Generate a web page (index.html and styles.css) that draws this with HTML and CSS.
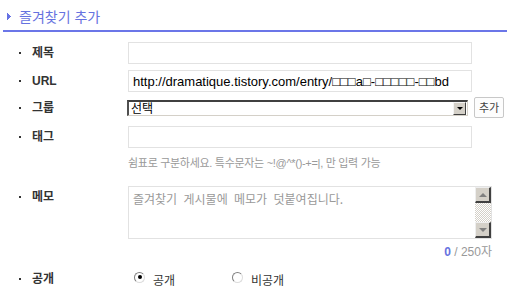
FILE: index.html
```html
<!DOCTYPE html>
<html lang="ko">
<head>
<meta charset="utf-8">
<title>즐겨찾기 추가</title>
<link rel="stylesheet" href="styles.css">
</head>
<body>
<div class="header">
  <svg class="chev" width="4" height="7" viewBox="0 0 4 7"><path d="M0 0h1v1h1v1h1v1h1v1h-1v1h-1v1h-1v1h-1z" fill="#6672e4"/></svg>
  <span class="title">즐겨찾기 추가</span>
</div>
<div class="form">
  <div class="row r-title">
    <div class="label"><i class="dot"></i>제목</div>
    <input class="field" type="text" value="">
  </div>
  <div class="row r-url">
    <div class="label"><i class="dot"></i>URL</div>
    <input class="field url" type="text" value="http://dramatique.tistory.com/entry/□□□a□-□□□□□-□□bd">
  </div>
  <div class="row r-group">
    <div class="label"><i class="dot"></i>그룹</div>
    <div class="select">
      <span class="sel-text">선택</span>
      <span class="sel-btn"><i class="tri-down"></i></span>
    </div>
    <button class="add-btn" type="button">추가</button>
  </div>
  <div class="row r-tag">
    <div class="label"><i class="dot"></i>태그</div>
    <input class="field" type="text" value="">
  </div>
  <div class="help">쉼표로 구분하세요. 특수문자는 ~!@^*()-+=|, 만 입력 가능</div>
  <div class="row r-memo">
    <div class="label memo-label"><i class="dot"></i>메모</div>
    <div class="memo">
      <div class="memo-text">즐겨찾기 게시물에 메모가 덧붙여집니다.</div>
      <div class="scroll">
        <span class="sb-btn"><i class="sb-up"></i></span>
        <span class="sb-track"></span>
        <span class="sb-btn"><i class="sb-down"></i></span>
      </div>
    </div>
  </div>
  <div class="counter"><b>0</b> / 250자</div>
  <div class="row r-open">
    <div class="label"><i class="dot"></i>공개</div>
    <div class="radios">
      <span class="radio-item"><i class="radio checked"></i>공개</span>
      <span class="radio-item"><i class="radio"></i>비공개</span>
    </div>
  </div>
</div>
</body>
</html>
```
FILE: styles.css
```css
* { box-sizing: border-box; }
html, body { margin: 0; padding: 0; background: #fff; }
body {
  width: 507px;
  height: 304px;
  overflow: hidden;
  font-family: "Liberation Sans", "Noto Sans CJK KR", sans-serif;
  color: #333;
}
.header {
  margin-left: 3px;
  height: 32px;
  border-bottom: 2px solid #6b76e8;
  display: flex;
  align-items: center;
  padding-left: 4px;
  padding-top: 2px;
}
.chev { display: block; margin-right: 8px; }
.title {
  font-family: "Noto Sans CJK KR", sans-serif;
  font-size: 14px;
  color: #6672e0;
  line-height: 16px;
}
.form { padding-top: 10px; }
.row { display: flex; align-items: center; }
.label {
  width: 128px;
  flex-shrink: 0;
  display: flex;
  align-items: center;
  padding-left: 19px;
  font-size: 12px;
  font-weight: bold;
  color: #333;
  line-height: 14px;
}
.dot {
  display: block;
  width: 2px;
  height: 2px;
  background: #333;
  margin-right: 11px;
}
.field {
  width: 344px;
  height: 22px;
  border: 1px solid #e2e2e2;
  padding: 0 4px;
  margin: 0;
  font-family: "Liberation Sans", "DejaVu Sans", sans-serif;
  font-size: 13px;
  color: #000;
  background: #fff;
  outline: none;
}
.r-url { margin-top: 6px; }
.r-group { margin-top: 5px; height: 21px; }
.select {
  margin-left: -1px;
  width: 341px;
  height: 16px;
  border-style: solid;
  border-width: 2px 1px 1px 2px;
  border-color: #404040 #d4d0c8 #d4d0c8 #505050;
  display: flex;
  align-items: center;
  justify-content: space-between;
  background: #fff;
}
.sel-text {
  font-family: "Noto Sans CJK KR", sans-serif;
  font-size: 12px;
  line-height: 12px;
  color: #000;
  padding-left: 2px;
}
.sel-btn {
  width: 13px;
  height: 13px;
  background: #d4d0c8;
  border-style: solid;
  border-width: 1px;
  border-color: #f4f4f4 #404040 #404040 #f4f4f4;
  display: flex;
  align-items: center;
  justify-content: center;
  margin-right: 1px;
}
.tri-down {
  display: block;
  width: 0;
  height: 0;
  border-left: 3px solid transparent;
  border-right: 3px solid transparent;
  border-top: 3px solid #000;
}
.add-btn {
  margin-left: 6px;
  width: 30px;
  height: 21px;
  border: 1px solid #c8c8c8;
  border-radius: 2px;
  background: #fdfdfd;
  font-family: "Noto Sans CJK KR", sans-serif;
  font-size: 11px;
  color: #444;
  padding: 0;
  line-height: 19px;
}
.r-tag { margin-top: 8px; }
.help {
  margin-left: 128px;
  margin-top: 7px;
  height: 16px;
  line-height: 16px;
  font-family: "Liberation Sans", "Noto Sans CJK KR", sans-serif;
  font-size: 11px;
  letter-spacing: -0.3px;
  color: #999;
}
.r-memo { margin-top: 15px; align-items: flex-start; }
.memo-label { height: 22px; }
.memo {
  width: 364px;
  height: 53px;
  border: 1px solid #e2e2e2;
  display: flex;
  background: #fff;
}
.memo-text {
  flex: 1;
  padding: 4px 0 0 4px;
  font-family: "Noto Sans CJK KR", sans-serif;
  font-size: 12px;
  line-height: 16px;
  word-spacing: 3px;
  color: #999;
}
.scroll {
  width: 16px;
  display: flex;
  flex-direction: column;
}
.sb-btn {
  width: 16px;
  height: 16px;
  background: #d4d0c8;
  border-style: solid;
  border-width: 1px 2px 2px 1px;
  border-color: #eeeeee #404040 #404040 #eeeeee;
  display: flex;
  align-items: center;
  justify-content: center;
  flex-shrink: 0;
}
.sb-track {
  flex: 1;
  background-color: #fff;
  background-image:
    linear-gradient(45deg, #d4d0c8 25%, transparent 25%, transparent 75%, #d4d0c8 75%),
    linear-gradient(45deg, #d4d0c8 25%, transparent 25%, transparent 75%, #d4d0c8 75%);
  background-size: 2px 2px;
  background-position: 0 0, 1px 1px;
}
.sb-up, .sb-down {
  display: block;
  width: 0;
  height: 0;
  border-left: 4px solid transparent;
  border-right: 4px solid transparent;
}
.sb-up { border-bottom: 4px solid #808080; }
.sb-down { border-top: 4px solid #808080; }
.counter {
  width: 492px;
  text-align: right;
  margin-top: 6px;
  height: 14px;
  line-height: 14px;
  font-family: "Liberation Sans", "Noto Sans CJK KR", sans-serif;
  font-size: 12px;
  color: #999;
}
.counter b { color: #6672e0; }
.r-open { margin-top: 10px; height: 20px; }
.radios { display: flex; align-items: center; }
.radio-item {
  display: flex;
  align-items: center;
  font-family: "Noto Sans CJK KR", sans-serif;
  font-size: 12px;
  color: #333;
  padding-left: 6px;
  width: 98px;
}
.radio {
  display: flex;
  align-items: center;
  justify-content: center;
  width: 11px;
  height: 11px;
  border-radius: 50%;
  border: 1px solid;
  border-color: #808080 #dcdcdc #dcdcdc #808080;
  background: #fff;
  margin-right: 8px;
  margin-top: -4px;
}
.radio.checked::after {
  content: "";
  display: block;
  width: 4px;
  height: 4px;
  border-radius: 50%;
  background: #000;
}
```
